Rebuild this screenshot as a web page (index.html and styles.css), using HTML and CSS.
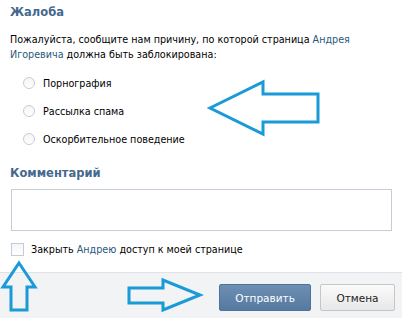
FILE: index.html
```html
<!DOCTYPE html>
<html>
<head>
    <title>Жалоба</title>
    <link rel="stylesheet" href="styles.css">
</head>
<body>
    <div class="dialog">
        <div class="content">
            <h2 class="title">Жалоба</h2>
            <p class="intro">Пожалуйста, сообщите нам причину, по которой страница <a href="#">Андрея</a> <a href="#">Игоревича</a> должна быть заблокирована:</p>

            <ul class="reasons">
                <li><span class="radio"></span><span>Порнография</span></li>
                <li><span class="radio"></span><span>Рассылка спама</span></li>
                <li><span class="radio"></span><span>Оскорбительное поведение</span></li>
            </ul>

            <h3 class="title">Комментарий</h3>
            <div class="comment"></div>

            <label class="close-access"><span class="checkbox"></span><span>Закрыть <a href="#">Андрею</a> доступ к моей странице</span></label>
        </div>

        <div class="footer">
            <button class="btn btn-blue">Отправить</button>
            <button class="btn btn-gray">Отмена</button>
        </div>
    </div>

    <!-- annotation arrows drawn over the form -->
    <svg class="arrows" width="402" height="318" viewBox="0 0 402 318">
        <polygon points="210,108 263,82 263,94 318,94 318,122 263,122 263,134"/>
        <polygon points="19,263 35,287 27,287 27,310 11,310 11,287 3,287"/>
        <polygon points="129,288 163,288 163,280 200,295 163,310 163,303 129,303"/>
    </svg>
</body>
</html>
```

FILE: styles.css
```css
body {
    margin: 0;
    background: #fff;
    font-family: "DejaVu Sans", Verdana, sans-serif;
    font-size: 9.6px;
    color: #000;
}
a {
    color: #2b587a;
    text-decoration: none;
}
.dialog {
    width: 402px;
    height: 318px;
    display: flex;
    flex-direction: column;
}
.content {
    flex: 1;
    padding: 4px 10px 0 10px;
}
.title {
    margin: 0;
    font-size: 11.5px;
    line-height: 16px;
    font-weight: bold;
    color: #45688e;
}
.intro {
    margin: 12px 0 0 0;
    line-height: 15px;
}
.reasons {
    list-style: none;
    margin: 7px 0 12px 0;
    padding: 0 0 0 13px;
}
.reasons li {
    height: 28px;
    display: flex;
    align-items: center;
    gap: 8px;
}
.radio {
    width: 10px;
    height: 10px;
    border: 1px solid #c5cbd2;
    border-radius: 50%;
    background: linear-gradient(#f4f5f7, #fff);
}
.comment {
    margin: 8px 0 0 1px;
    height: 40px;
    border: 1px solid #c5ced8;
    background: #fff;
}
.close-access {
    margin: 12px 0 0 1px;
    display: flex;
    align-items: center;
    gap: 7px;
    height: 13px;
}
.checkbox {
    width: 11px;
    height: 11px;
    border: 1px solid #c5cbd2;
    background: linear-gradient(#f4f5f7, #fff);
}
.footer {
    height: 46px;
    border-top: 1px solid #dfe3e8;
    background: #f2f3f5;
    display: flex;
    justify-content: flex-end;
    align-items: flex-start;
    gap: 9px;
    padding: 11px 7px 0 0;
    box-sizing: border-box;
}
.btn {
    height: 27px;
    font-family: "DejaVu Sans", Verdana, sans-serif;
    font-size: 10.5px;
    border-radius: 2px;
    padding: 0;
    cursor: pointer;
}
.btn-blue {
    width: 92px;
    color: #fff;
    background: linear-gradient(#6d8fb3, #5679a0);
    border: 1px solid #4f729a;
}
.btn-gray {
    width: 75px;
    color: #222;
    background: linear-gradient(#fafafa, #e8e8e8);
    border: 1px solid #c6c6c6;
}
.arrows {
    position: absolute;
    left: 0;
    top: 0;
    pointer-events: none;
}
.arrows polygon {
    fill: none;
    stroke: #1a9ad6;
    stroke-width: 3;
    stroke-linejoin: miter;
}
```
